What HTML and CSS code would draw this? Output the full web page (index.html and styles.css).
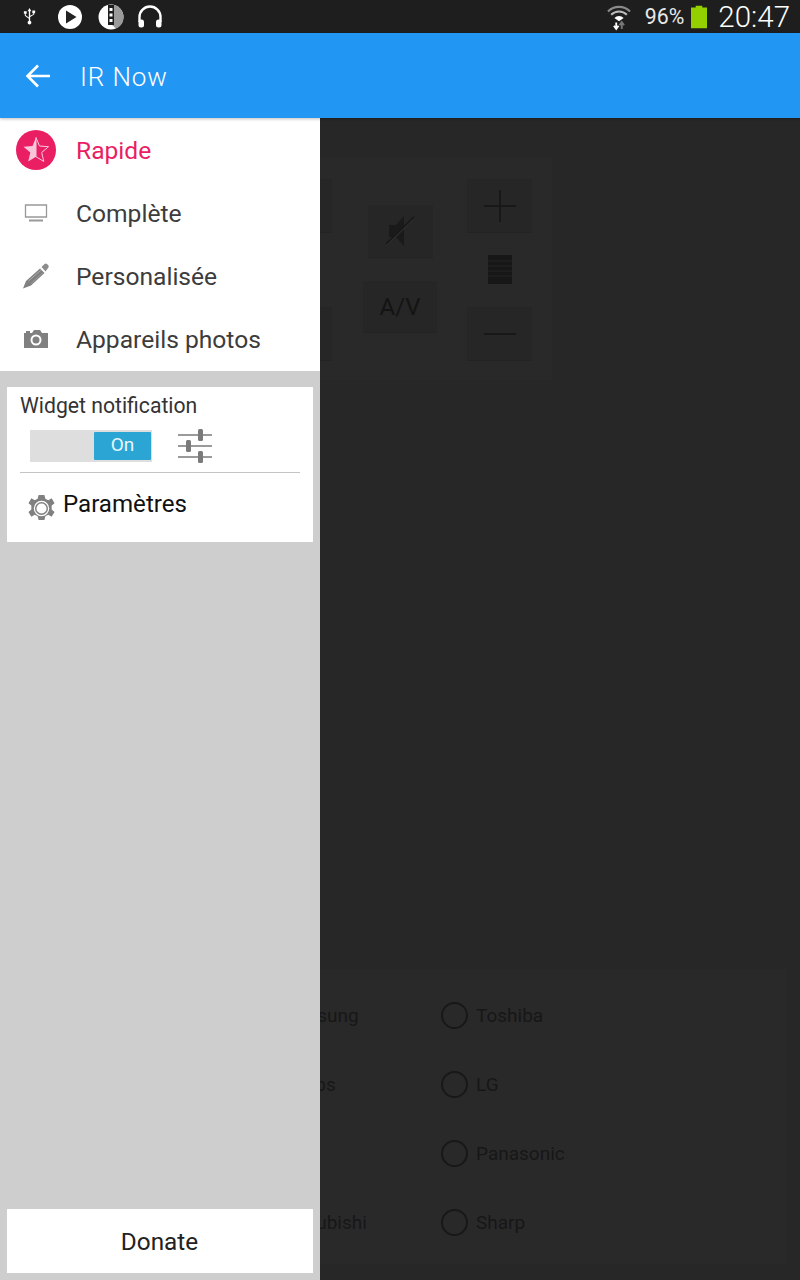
FILE: index.html
```html
<!DOCTYPE html>
<html lang="fr">
<head>
<meta charset="utf-8">
<title>IR Now</title>
<link rel="stylesheet" href="styles.css">
</head>
<body>
<div class="app">
  <header class="status">
    <div class="status-left">
      <svg class="st-usb" viewBox="0 0 16 20"><path d="M8 1 6 4.500h1.300V11L4 8.600V7h1V4.500H2V7h1v2.100l4.300 3.200v2.300a2 2 0 1 0 1.400 0V10.500l4.300-2.600V6.500h1V3.500h-3v3h1v1L8.700 9.300V4.500H10z" fill="#fff"/></svg>
      <svg class="st-round" viewBox="0 0 26 26"><circle cx="13" cy="13" r="12" fill="#fff"/><path d="M9 6.500v13l10.500-6.500z" fill="#222"/></svg>
      <svg class="st-round" viewBox="0 0 26 26"><circle cx="13" cy="13" r="12.500" fill="#fff"/><path d="M13 .5A12.500 12.500 0 0 1 25.500 13 12.500 12.500 0 0 1 18 24.500L13 20z" fill="#9a9a9a"/><rect x="10" y="1" width="6" height="20" fill="#1e1e1e"/><rect x="11.500" y="4" width="3" height="3" fill="#fff"/><rect x="11.500" y="9.500" width="3" height="3" fill="#fff"/><rect x="11.500" y="15" width="3" height="3" fill="#fff"/></svg>
      <svg class="st-round st-phones" viewBox="0 0 26 26"><path d="M2.500 18v-5a10.500 10.500 0 0 1 21 0v5" fill="none" stroke="#fff" stroke-width="2.400"/><rect x="1.500" y="15.500" width="5.500" height="8" rx="2.500" fill="#fff"/><rect x="19" y="15.500" width="5.500" height="8" rx="2.500" fill="#fff"/></svg>
    </div>
    <div class="status-right">
      <svg class="st-wifi" viewBox="0 0 26 28"><path d="M1 8a17 17 0 0 1 24 0" fill="none" stroke="#8a8a8a" stroke-width="2.200"/><path d="M4.500 11.500a12 12 0 0 1 17 0" fill="none" stroke="#bbb" stroke-width="2.200"/><path d="M8 15a7 7 0 0 1 10 0l-5 3.500z" fill="#fff"/><path d="M10 27v-7M7.500 23.500l2.500 3.500 2.500-3.500" fill="none" stroke="#fff" stroke-width="2"/><path d="M16 20v7M13.500 23l2.500-3.500 2.500 3.500" fill="none" stroke="#777" stroke-width="2"/></svg>
      <span class="st-pct">96%</span>
      <svg class="st-batt" viewBox="0 0 17 24"><path d="M5 0h7v2h5v22H0V2h5z" fill="#94d000"/></svg>
      <span class="st-clock">20:47</span>
    </div>
  </header>

  <div class="appbar">
    <svg class="back" viewBox="0 0 26 26"><path d="M25 13H3M13 2.500 2.500 13 13 23.500" fill="none" stroke="#fff" stroke-width="2.600"/></svg>
    <span class="appbar-title">IR Now</span>
  </div>

  <main class="content">
    <section class="remote">
      <div class="rcol rcol-left">
        <div class="rbtn rbtn-std"></div>
        <div class="rbtn rbtn-std"></div>
      </div>
      <div class="rcol rcol-mid">
        <div class="rbtn rbtn-mute">
          <svg class="ic-mute" viewBox="0 0 30 36"><path d="M4 12h7l8-9v30l-8-9H4z" fill="#1a1a1a"/><path d="M1 31 29 4" stroke="#191919" stroke-width="1.800"/><path d="M1 33 29 6" stroke="#2c2c2c" stroke-width="1.200"/></svg>
        </div>
        <div class="rbtn rbtn-av">A/V</div>
      </div>
      <div class="rcol rcol-right">
        <div class="rbtn rbtn-std">
          <svg class="ic-plus" viewBox="0 0 32 32"><path d="M0 16h32M16 0v32" stroke="#181818" stroke-width="2"/></svg>
        </div>
        <svg class="ic-list" viewBox="0 0 24 29"><rect width="24" height="29" fill="#171717"/><path d="M0 6h24M0 11h24M0 16h24M0 21h24" stroke="#2a2a2a" stroke-width=".8"/></svg>
        <div class="rbtn rbtn-std">
          <svg class="ic-minus" viewBox="0 0 32 4"><path d="M0 2h32" stroke="#181818" stroke-width="2"/></svg>
        </div>
      </div>
    </section>

    <section class="brands">
      <label class="brand"><span class="radio"></span>Samsung</label>
      <label class="brand"><span class="radio"></span>Toshiba</label>
      <label class="brand"><span class="radio"></span>Philips</label>
      <label class="brand"><span class="radio"></span>LG</label>
      <label class="brand"><span class="radio"></span>Sony</label>
      <label class="brand"><span class="radio"></span>Panasonic</label>
      <label class="brand"><span class="radio"></span>Mitsubishi</label>
      <label class="brand"><span class="radio"></span>Sharp</label>
    </section>

    <aside class="drawer">
      <nav class="menu">
        <div class="menu-item is-active">
          <span class="menu-icon">
            <svg class="ic-star" viewBox="0 0 40 40"><circle cx="20" cy="20" r="20" fill="#e91e63"/><path d="M20 7.500 23.500 16 32.500 16.700 25.700 22.500 27.800 31.500 20 26.700 12.200 31.500 14.300 22.500 7.500 16.700 16.500 16z" fill="#f9c5d8"/><path d="M20 7.500 23.500 16 32.500 16.700 25.700 22.500 27.800 31.500 20 26.700z" fill="#e91e63" stroke="#f9c5d8" stroke-width="1"/></svg>
          </span>
          <span class="menu-label">Rapide</span>
        </div>
        <div class="menu-item">
          <span class="menu-icon">
            <svg class="ic-tv" viewBox="0 0 24 18"><path d="M1.500 1h21v12h-21z" fill="none" stroke="#999" stroke-width="1.300"/><path d="M5 16.500h14" stroke="#999" stroke-width="2"/></svg>
          </span>
          <span class="menu-label">Complète</span>
        </div>
        <div class="menu-item">
          <span class="menu-icon">
            <svg class="ic-pencil" viewBox="0 0 26 26"><path d="M0 25.500 3 18 17 5.500 21.500 10 8 22.500z" fill="#808080"/><path d="M18.500 4 21.500 1a2 2 0 0 1 2.500 0l1.200 1.200a2 2 0 0 1 0 2.600L22.500 8.500z" fill="#8c8c8c"/><path d="M5.500 18 18 7" stroke="#b8b8b8" stroke-width=".8"/><path d="M8 20.500 20 9.500" stroke="#a8a8a8" stroke-width=".7"/></svg>
          </span>
          <span class="menu-label">Personalisée</span>
        </div>
        <div class="menu-item">
          <span class="menu-icon">
            <svg class="ic-camera" viewBox="0 0 24 18"><path d="M0 3h2V1h4v2h2l2-3h6l2 3h6v15H0z" fill="#808080"/><circle cx="12" cy="10" r="5.500" fill="#fff"/><circle cx="12" cy="10" r="3.500" fill="#808080"/></svg>
          </span>
          <span class="menu-label">Appareils photos</span>
        </div>
      </nav>

      <div class="card">
        <div class="card-title">Widget notification</div>
        <div class="widget-row">
          <div class="toggle"><span class="toggle-on">On</span></div>
          <svg class="ic-sliders" viewBox="0 0 34 34"><path d="M0 6h34M0 17h34M0 28h34" stroke="#7a7a7a" stroke-width="1.500"/><rect x="20" y="0" width="5" height="12" rx="1.500" fill="#7a7a7a"/><rect x="8" y="11" width="5" height="12" rx="1.500" fill="#7a7a7a"/><rect x="20" y="22" width="5" height="12" rx="1.500" fill="#7a7a7a"/></svg>
        </div>
        <div class="card-sep"></div>
        <div class="settings-row">
          <svg class="ic-gear" viewBox="0 0 30 30"><path d="M12 1h6l1 4 3 1.500 3.500-2 3 5-3 2.500v4l3 2.500-3 5-3.500-2-3 1.500-1 4h-6l-1-4-3-1.500-3.500 2-3-5 3-2.500v-4l-3-2.500 3-5 3.500 2 3-1.500z" fill="#808080"/><circle cx="15" cy="15" r="8" fill="#fff"/><circle cx="15" cy="15" r="6" fill="none" stroke="#808080" stroke-width="1.500"/></svg>
          <span class="settings-label">Paramètres</span>
        </div>
      </div>

      <button class="donate">Donate</button>
    </aside>
  </main>
</div>
</body>
</html>
```
FILE: styles.css
```css
* { box-sizing: border-box; }
html, body { margin: 0; padding: 0; }
body { width: 800px; height: 1280px; overflow: hidden; font-family: Roboto, "Liberation Sans", sans-serif; }

.app { width: 800px; height: 1280px; display: flex; flex-direction: column; background: #272727; }

/* status bar */
.status { height: 33px; flex: none; background: #1e1e1e; display: flex; justify-content: space-between; align-items: center; color: #fff; }
.status-left { display: flex; align-items: center; gap: 15px; padding-left: 23px; }
.st-usb { width: 15px; height: 23px; margin-right: 5px; margin-left: -1px; }
.st-round { width: 26px; height: 26px; }
.st-phones { margin-left: -2px; }
.status-right { display: flex; align-items: center; padding-right: 10px; }
.st-wifi { width: 24px; height: 28px; }
.st-pct { font-size: 21.3px; margin-left: 14px; color: #e8e8e8; }
.st-batt { width: 16px; height: 24px; margin-left: 7px; }
.st-clock { font-size: 29.5px; font-weight: 300; margin-left: 11px; }

/* app bar */
.appbar { height: 85px; flex: none; background: #2196f3; display: flex; align-items: center; padding-left: 25px; position: relative; z-index: 2; box-shadow: 0 1px 3px rgba(0,0,0,.25); }
.back { width: 26px; height: 26px; }
.appbar-title { color: #fff; font-size: 26px; margin: 2px 0 0 29px; font-weight: 300; letter-spacing: .9px; }

/* dimmed content */
.content { flex: 1; position: relative; display: flex; flex-direction: column; padding: 39px 14px 15px; }
.remote { width: 538px; height: 223px; background: #292929; display: flex; justify-content: flex-end; padding: 22px 20px 0 0; }
.rcol { display: flex; flex-direction: column; align-items: center; }
.rcol-left { justify-content: space-between; height: 182px; margin-right: 31px; }
.rcol-mid { width: 74px; margin-right: 30px; padding-top: 26px; gap: 23px; }
.rcol-right { width: 65px; height: 182px; justify-content: space-between; }
.rbtn { background: #262626; border-bottom: 1px solid #232323; display: flex; align-items: center; justify-content: center; }
.rbtn-std { width: 65px; height: 54px; }
.rbtn-mute { width: 65px; height: 53px; }
.rbtn-av { width: 74px; height: 52px; color: #141414; font-size: 24px; }
.ic-mute { width: 30px; height: 36px; }
.ic-plus { width: 32px; height: 32px; }
.ic-minus { width: 32px; height: 4px; }
.ic-list { width: 24px; height: 29px; margin-top: -2px; }

.brands { margin-top: auto; height: 296px; width: 772px; background: #292929; border-bottom: 1px solid #282828; display: grid; grid-template-columns: 197px 197px; grid-auto-rows: 69px; padding: 12px 0 0 230px; }
.brand { display: flex; align-items: center; gap: 8px; color: #171717; font-size: 19px; }
.radio { width: 27px; height: 27px; border-radius: 50%; border: 2px solid #181818; flex: none; }

/* drawer */
.drawer { position: absolute; left: 0; top: 0; bottom: 0; width: 320px; background: #cecece; display: flex; flex-direction: column; padding-bottom: 7px; z-index: 1; }
.menu { background: #fff; height: 253px; flex: none; }
.menu-item { height: 63px; display: flex; align-items: center; color: #3c3c3c; font-size: 24.6px; }
.menu-label { padding-top: 1px; }
.is-active { color: #e91e63; }
.menu-icon { width: 76px; flex: none; display: flex; justify-content: center; padding-right: 4px; }
.ic-star { width: 40px; height: 40px; }
.ic-tv { width: 24px; height: 18px; }
.ic-pencil { width: 26px; height: 26px; }
.ic-camera { width: 24px; height: 18px; }

.card { margin: 16px 7px 0; height: 155px; background: #fff; padding: 5px 13px 0; }
.card-title { font-size: 21.2px; color: #333; line-height: 27px; }
.widget-row { display: flex; align-items: center; gap: 26px; margin: 10px 0 0 10px; }
.toggle { width: 122px; height: 32px; background: #dedede; display: flex; justify-content: flex-end; padding: 2px 1px; }
.toggle-on { width: 57px; background: #2ba6d4; color: #e8f6fb; font-size: 19px; line-height: 26px; display: block; text-align: center; border-radius: 1px; }
.ic-sliders { width: 34px; height: 34px; }
.card-sep { height: 1px; background: #c4c4c4; margin-top: 9px; }
.settings-row { display: flex; align-items: flex-start; gap: 7px; padding: 18px 0 0 7px; }
.ic-gear { width: 29px; height: 29px; margin-top: 3px; }
.settings-label { font-size: 24.1px; color: #111; line-height: 26px; }

.donate { margin: auto 7px 0; height: 64px; flex: none; background: #fff; border: 0; padding: 0 1px 0 0; color: #222; font: 24.3px Roboto, "Liberation Sans", sans-serif; }
```
